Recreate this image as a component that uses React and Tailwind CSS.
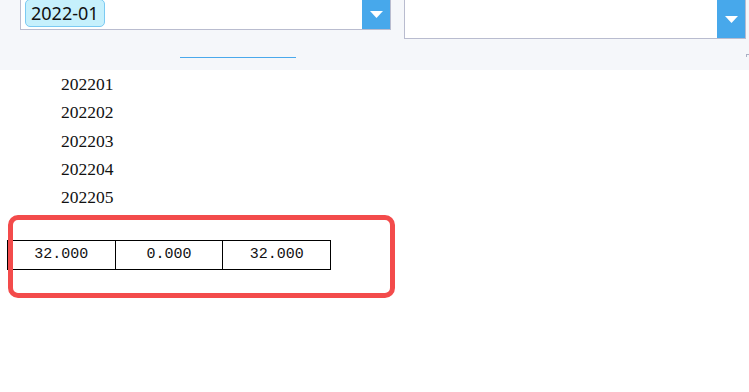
import React from "react";

const months = ["202201", "202202", "202203", "202204", "202205"];
const totals = ["32.000", "0.000", "32.000"];

const Arrow = ({ className }) => (
  <div className={`flex items-center justify-center bg-[#47a8eb] ${className}`}>
    <svg width="13" height="7" viewBox="0 0 13 7">
      <polygon points="0,0 13,0 6.5,7" fill="#ffffff" />
    </svg>
  </div>
);

const App = () => {
  return (
    <div className="relative w-[749px] h-[392px] bg-white overflow-hidden">
      {/* Filter bar */}
      <div className="relative h-[70px] bg-[#f5f7fa]">
        <div className="flex items-start">
          <div className="ml-[20px] w-[371px] h-[30px] flex bg-white border-x border-b border-[#b9bccf]">
            <div className="flex-1 flex items-start pl-[4px]">
              <span className="h-[28px] px-[5px] flex items-center bg-[#c6f0fc] border border-[#7ccaf2] rounded-[5px] text-[18px] text-[#111] font-['Noto_Sans',sans-serif] -mt-[1px]">
                2022-01
              </span>
            </div>
            <Arrow className="w-[28px] h-[29px]" />
          </div>
          <div className="ml-[13px] w-[342px] h-[39px] flex bg-white border-x border-b border-[#b9bccf]">
            <div className="flex-1" />
            <Arrow className="w-[28px] h-[38px]" />
          </div>
        </div>
        <div className="absolute left-[180px] top-[57px] w-[116px] h-px bg-[#4aa9ec]" />
        <div className="absolute left-[746px] top-[54px] w-[3px] h-[3px] border-l border-t border-[#aab0c4]" />
      </div>

      {/* Month list */}
      <div className="pl-[61px] font-['Liberation_Serif',serif] text-[17.5px] text-[#111]">
        {months.map((m) => (
          <div key={m} className="h-[28.25px] leading-[28.25px]">{m}</div>
        ))}
      </div>

      {/* Totals row */}
      <div className="mt-[29px] ml-[7px] flex w-[324px] h-[30px] border border-black font-['Liberation_Mono',monospace] text-[15px] text-[#111]">
        {totals.map((t, i) => (
          <div
            key={i}
            className={`flex-1 flex items-center justify-center ${i > 0 ? "border-l border-black" : ""}`}
          >
            {t}
          </div>
        ))}
      </div>

      {/* Highlight annotation */}
      <div className="absolute left-[8px] top-[215px] w-[387px] h-[83px] border-[5px] border-[#f34b4b] rounded-[10px]" />
    </div>
  );
};

export default App;
